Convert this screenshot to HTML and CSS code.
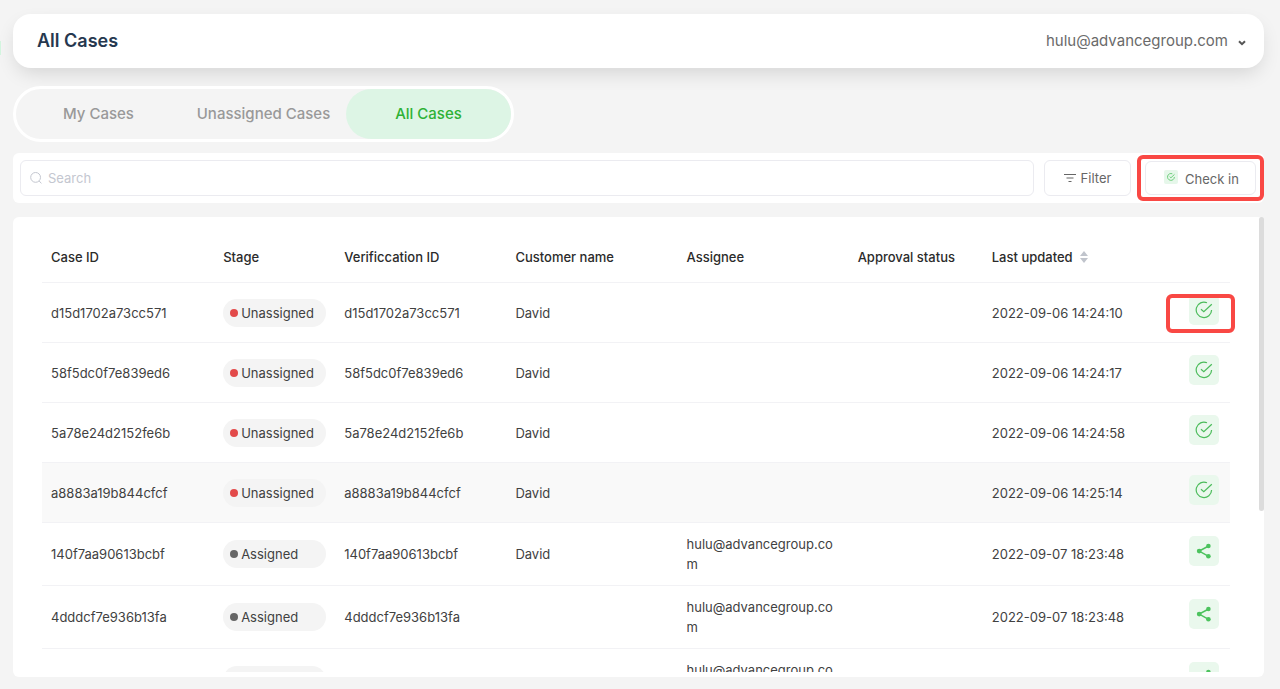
FILE: index.html
```html
<!DOCTYPE html>
<html lang="en">
<head>
<meta charset="utf-8">
<meta name="viewport" content="width=device-width, initial-scale=1">
<title>All Cases</title>
<link rel="stylesheet" href="styles.css">
</head>
<body>
<svg class="sprite" aria-hidden="true">
  <symbol id="check" viewBox="0 0 18 18"><path d="M12 1.8A7.7 7.7 0 1 0 16.6 9" /><path d="M6 8.2l2.8 2.6L16.8 3.2" /></symbol>
  <symbol id="share" viewBox="0 0 16 16"><path d="M12.6 3L3.2 8.1L12.6 13.3" /><circle cx="3.2" cy="8.1" r="2.4" /><circle cx="12.4" cy="3" r="2.3" /><circle cx="12.4" cy="13.3" r="2.3" /></symbol>
</svg>
<div class="side-marker"></div>
<header class="topbar">
  <h1 class="title">All Cases</h1>
  <button class="account" type="button">hulu@advancegroup.com
    <svg class="chevron" viewBox="0 0 8 6"><path d="M1 1.2l3 3 3-3" /></svg>
  </button>
</header>
<nav class="tabs">
  <button class="tab" type="button">My Cases</button>
  <button class="tab" type="button">Unassigned Cases</button>
  <button class="tab tab-active" type="button">All Cases</button>
</nav>
<section class="toolbar">
  <label class="search">
    <svg class="search-icon" viewBox="0 0 12 12"><circle cx="5.6" cy="5.4" r="4.9" /><path d="M9.2 9L11.4 11.4" /></svg>
    <input class="search-input" type="text" placeholder="Search" aria-label="Search">
  </label>
  <button class="button filter" type="button">
    <svg class="filter-icon" viewBox="0 0 12 10"><path d="M0 1.5h12M2.5 5h7M4.5 8.5h3" /></svg>Filter
  </button>
  <div class="checkin-wrap">
    <button class="button checkin" type="button">
      <span class="mini"><svg class="mini-icon"><use href="#check" /></svg></span>Check in
    </button>
  </div>
</section>
<main class="card">
  <div class="scroll">
    <table class="cases">
      <colgroup><col class="c-case"><col class="c-stage"><col class="c-id"><col class="c-id"><col class="c-id"><col class="c-approval"><col class="c-updated"><col class="c-action"></colgroup>
      <thead>
        <tr><th>Case ID</th><th>Stage</th><th>Verificcation ID</th><th>Customer name</th><th>Assignee</th><th>Approval status</th>
        <th><span class="sort">Last updated <svg class="sort-icon" viewBox="0 0 8 12"><path d="M0 5l4-5 4 5zM0 7l4 5 4-5z" /></svg></span></th><th></th></tr>
      </thead>
      <tbody>
        <tr><td>d15d1702a73cc571</td><td><span class="stage open">Unassigned</span></td><td>d15d1702a73cc571</td><td>David</td><td></td><td></td><td>2022-09-06 14:24:10</td><td class="action"><button class="icon-button" type="button" aria-label="Check in"><svg class="check-icon"><use href="#check" /></svg></button><span class="highlight"></span></td></tr>
        <tr><td>58f5dc0f7e839ed6</td><td><span class="stage open">Unassigned</span></td><td>58f5dc0f7e839ed6</td><td>David</td><td></td><td></td><td>2022-09-06 14:24:17</td><td class="action"><button class="icon-button" type="button" aria-label="Check in"><svg class="check-icon"><use href="#check" /></svg></button></td></tr>
        <tr><td>5a78e24d2152fe6b</td><td><span class="stage open">Unassigned</span></td><td>5a78e24d2152fe6b</td><td>David</td><td></td><td></td><td>2022-09-06 14:24:58</td><td class="action"><button class="icon-button" type="button" aria-label="Check in"><svg class="check-icon"><use href="#check" /></svg></button></td></tr>
        <tr class="hovered"><td>a8883a19b844cfcf</td><td><span class="stage open">Unassigned</span></td><td>a8883a19b844cfcf</td><td>David</td><td></td><td></td><td>2022-09-06 14:25:14</td><td class="action"><button class="icon-button" type="button" aria-label="Check in"><svg class="check-icon"><use href="#check" /></svg></button></td></tr>
        <tr><td>140f7aa90613bcbf</td><td><span class="stage">Assigned</span></td><td>140f7aa90613bcbf</td><td>David</td><td>hulu@advancegroup.com</td><td></td><td>2022-09-07 18:23:48</td><td class="action"><button class="icon-button" type="button" aria-label="Share"><svg class="share-icon"><use href="#share" /></svg></button></td></tr>
        <tr><td>4dddcf7e936b13fa</td><td><span class="stage">Assigned</span></td><td>4dddcf7e936b13fa</td><td></td><td>hulu@advancegroup.com</td><td></td><td>2022-09-07 18:23:48</td><td class="action"><button class="icon-button" type="button" aria-label="Share"><svg class="share-icon"><use href="#share" /></svg></button></td></tr>
        <tr><td></td><td><span class="stage" role="img" aria-label="Assigned"></span></td><td></td><td></td><td>hulu@advancegroup.com</td><td></td><td></td><td class="action"><button class="icon-button" type="button" aria-label="Share"><svg class="share-icon"><use href="#share" /></svg></button></td></tr>
      </tbody>
    </table>
  </div>
  <div class="thumb"></div>
</main>
</body>
</html>
```
FILE: styles.css
```css
* { box-sizing: border-box; }
body {
  margin: 0;
  height: 100vh;
  padding: 14px 16px 12px 13px;
  display: flex;
  flex-direction: column;
  overflow: hidden;
  background: #f4f4f4;
  color: #414141;
  font: 13px/20px Inter, "Liberation Sans", sans-serif;
}
button, input { font: inherit; color: inherit; }
button { border: 0; background: none; padding: 0; cursor: pointer; }
svg { fill: none; flex: none; }
.sprite { position: absolute; width: 0; height: 0; }
.side-marker {
  position: absolute;
  left: 0;
  top: 41px;
  width: 1px;
  height: 14px;
  background: #d3f5df;
}
.topbar {
  flex: none;
  height: 54px;
  padding: 0 18px 0 24px;
  display: flex;
  align-items: center;
  justify-content: space-between;
  background: #fff;
  border-radius: 18px;
  box-shadow: 0 8px 20px -4px rgba(0, 0, 0, .14);
}
.title { margin: 0; font-size: 18px; font-weight: 600; color: #26384f; }
.account { display: flex; align-items: center; gap: 10px; font-size: 15px; color: #6a6a6a; }
.chevron { width: 8px; height: 6px; margin-top: 4px; stroke: #555; stroke-width: 2; }
.tabs {
  flex: none;
  align-self: flex-start;
  margin-top: 18px;
  display: flex;
  border: 3px solid #fff;
  border-radius: 28px;
  background: #f4f4f4;
}
.tab { width: 165px; height: 50px; border-radius: 25px; font-size: 15px; font-weight: 500; color: #999; white-space: nowrap; }
.tab-active { background: #ddf5e5; color: #2eb135; }
.toolbar {
  flex: none;
  height: 50px;
  margin-top: 11px;
  padding: 0 0 0 7px;
  display: flex;
  align-items: center;
  background: #fff;
  border-radius: 6px;
}
.search {
  flex: 1;
  height: 36px;
  padding: 0 9px;
  display: flex;
  align-items: center;
  gap: 6px;
  border: 1px solid #ebebf0;
  border-radius: 6px;
}
.search-icon { width: 12px; height: 12px; stroke: #c4c7d0; }
.search-input { flex: 1; min-width: 0; border: 0; outline: 0; padding: 0; background: none; }
.search-input::placeholder { color: #c4c7d0; opacity: 1; }
.button {
  height: 36px;
  display: flex;
  align-items: center;
  justify-content: center;
  border: 1px solid #ebebf0;
  border-radius: 6px;
  color: #666;
}
.filter { width: 87px; margin: 0 6px 0 10px; gap: 5px; }
.filter-icon { width: 12px; height: 10px; stroke: #666; }
.checkin-wrap {
  width: 127px;
  height: 46px;
  display: flex;
  align-items: center;
  justify-content: center;
  border: 4px solid #f94844;
  border-radius: 6px;
}
.checkin { width: 111px; height: 34px; padding: 2px 0 0 2px; gap: 7px; }
.mini { width: 14px; height: 14px; margin-bottom: 4px; display: grid; place-items: center; background: #e6f7ea; border-radius: 2px; }
.mini-icon { width: 8px; height: 8px; stroke: #5fc96d; stroke-width: 2; }
.card {
  position: relative;
  flex: 1;
  min-height: 0;
  margin-top: 14px;
  padding: 14px 24px 5px 29px;
  background: #fff;
  border-radius: 6px;
}
.scroll { height: 100%; padding-right: 10px; overflow: hidden; }
.cases { width: 100%; table-layout: fixed; border-collapse: separate; border-spacing: 0; }
.c-case { width: 172px; }
.c-id { width: 171px; }
.c-stage { width: 121px; }
.c-approval { width: 134px; }
.c-updated { width: 177px; }
.c-action { width: 70px; }
th { height: 52px; padding: 0 9px; text-align: left; font-weight: 500; color: #2b2b2b; white-space: nowrap; border-bottom: 1px solid #f2f2f5; }
td { height: 60px; padding: 11px 9px; border-bottom: 1px solid #f2f2f5; word-break: break-all; }
.hovered td { background: #f9f9f9; }
.sort { display: flex; align-items: center; gap: 7px; }
.sort-icon { width: 8px; height: 12px; fill: #c0c4cc; }
.stage {
  width: 103px;
  height: 28px;
  padding-left: 7px;
  display: flex;
  align-items: center;
  gap: 3px;
  border-radius: 14px;
  background: #f4f4f4;
  white-space: nowrap;
}
.stage::before { content: ""; width: 8px; height: 8px; border-radius: 50%; background: #666; }
.open::before { background: #e24a4a; }
td.action { position: relative; padding: 0 11px 6px; }
.icon-button { width: 30px; height: 30px; margin-left: auto; display: grid; place-items: center; border-radius: 5px; background: #eaf8ed; }
.check-icon { width: 18px; height: 18px; stroke: #4cbc5b; stroke-width: 1.2; }
.share-icon { width: 16px; height: 16px; stroke: #4cc35e; fill: #4cc35e; stroke-width: 1.5; }
#share path { fill: none; }
#share circle { stroke: none; }
.highlight {
  position: absolute;
  top: 11px;
  right: -5px;
  width: 69px;
  height: 39px;
  border: 4px solid #f94844;
  border-radius: 6px;
}
.thumb { position: absolute; top: 0; right: 0; width: 5px; height: 64%; border-radius: 3px; background: #dcdcdc; }
```
